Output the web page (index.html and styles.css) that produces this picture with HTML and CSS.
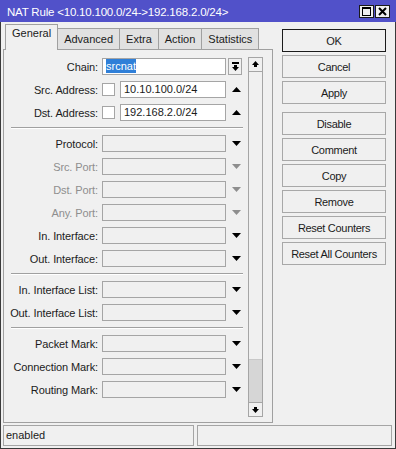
FILE: index.html
```html
<!DOCTYPE html>
<html lang="en">
<head>
    <meta charset="UTF-8">
    <title>NAT Rule</title>
    <link rel="stylesheet" href="styles.css">
</head>
<body>
    <div class="window">
        <div class="titlebar">
            <span class="title">NAT Rule &lt;10.10.100.0/24-&gt;192.168.2.0/24&gt;</span>
            <div class="title-buttons">
                <span class="tbtn">
                    <svg width="9" height="9" viewBox="0 0 9 9"><rect x="0.5" y="0.5" width="8" height="8" fill="none" stroke="#000"/><rect x="0" y="0" width="9" height="2" fill="#000"/></svg>
                </span>
                <span class="tbtn">
                    <svg width="9" height="9" viewBox="0 0 9 9"><path d="M1 1 L8 8 M8 1 L1 8" stroke="#000" stroke-width="2"/></svg>
                </span>
            </div>
        </div>

        <div class="main">
            <div class="left">
                <div class="tabs">
                    <div class="tab active">General</div>
                    <div class="tab">Advanced</div>
                    <div class="tab">Extra</div>
                    <div class="tab">Action</div>
                    <div class="tab">Statistics</div>
                </div>
                <div class="panel">
                    <div class="form">
                        <div class="section">
                            <div class="row">
                                <label class="label">Chain:</label>
                                <div class="field white"><span class="selected">srcnat</span></div>
                                <div class="dropbox">
                                    <svg width="7" height="9" viewBox="0 0 7 9"><rect x="0" y="0" width="7" height="2" fill="#000"/><rect x="2" y="3" width="3" height="2" fill="#000"/><polygon points="0,5 7,5 3.5,9" fill="#000"/></svg>
                                </div>
                            </div>
                            <div class="row">
                                <label class="label">Src. Address:</label>
                                <span class="check"></span>
                                <div class="field white short">10.10.100.0/24</div>
                                <div class="arrow"><svg width="9" height="5" viewBox="0 0 9 5"><polygon points="0,5 9,5 4.5,0" fill="#000"/></svg></div>
                            </div>
                            <div class="row">
                                <label class="label">Dst. Address:</label>
                                <span class="check"></span>
                                <div class="field white short">192.168.2.0/24</div>
                                <div class="arrow"><svg width="9" height="5" viewBox="0 0 9 5"><polygon points="0,5 9,5 4.5,0" fill="#000"/></svg></div>
                            </div>
                        </div>
                        <div class="sep"></div>
                        <div class="section">
                            <div class="row">
                                <label class="label">Protocol:</label>
                                <div class="field"></div>
                                <div class="arrow"><svg width="9" height="5" viewBox="0 0 9 5"><polygon points="0,0 9,0 4.5,5" fill="#000"/></svg></div>
                            </div>
                            <div class="row disabled">
                                <label class="label">Src. Port:</label>
                                <div class="field"></div>
                                <div class="arrow"><svg width="9" height="5" viewBox="0 0 9 5"><polygon points="0,0 9,0 4.5,5" fill="#8e8e8e"/></svg></div>
                            </div>
                            <div class="row disabled">
                                <label class="label">Dst. Port:</label>
                                <div class="field"></div>
                                <div class="arrow"><svg width="9" height="5" viewBox="0 0 9 5"><polygon points="0,0 9,0 4.5,5" fill="#8e8e8e"/></svg></div>
                            </div>
                            <div class="row disabled">
                                <label class="label">Any. Port:</label>
                                <div class="field"></div>
                                <div class="arrow"><svg width="9" height="5" viewBox="0 0 9 5"><polygon points="0,0 9,0 4.5,5" fill="#8e8e8e"/></svg></div>
                            </div>
                            <div class="row">
                                <label class="label">In. Interface:</label>
                                <div class="field"></div>
                                <div class="arrow"><svg width="9" height="5" viewBox="0 0 9 5"><polygon points="0,0 9,0 4.5,5" fill="#000"/></svg></div>
                            </div>
                            <div class="row">
                                <label class="label">Out. Interface:</label>
                                <div class="field"></div>
                                <div class="arrow"><svg width="9" height="5" viewBox="0 0 9 5"><polygon points="0,0 9,0 4.5,5" fill="#000"/></svg></div>
                            </div>
                        </div>
                        <div class="sep"></div>
                        <div class="section">
                            <div class="row">
                                <label class="label">In. Interface List:</label>
                                <div class="field"></div>
                                <div class="arrow"><svg width="9" height="5" viewBox="0 0 9 5"><polygon points="0,0 9,0 4.5,5" fill="#000"/></svg></div>
                            </div>
                            <div class="row">
                                <label class="label">Out. Interface List:</label>
                                <div class="field"></div>
                                <div class="arrow"><svg width="9" height="5" viewBox="0 0 9 5"><polygon points="0,0 9,0 4.5,5" fill="#000"/></svg></div>
                            </div>
                        </div>
                        <div class="sep"></div>
                        <div class="section">
                            <div class="row">
                                <label class="label">Packet Mark:</label>
                                <div class="field"></div>
                                <div class="arrow"><svg width="9" height="5" viewBox="0 0 9 5"><polygon points="0,0 9,0 4.5,5" fill="#000"/></svg></div>
                            </div>
                            <div class="row">
                                <label class="label">Connection Mark:</label>
                                <div class="field"></div>
                                <div class="arrow"><svg width="9" height="5" viewBox="0 0 9 5"><polygon points="0,0 9,0 4.5,5" fill="#000"/></svg></div>
                            </div>
                            <div class="row">
                                <label class="label">Routing Mark:</label>
                                <div class="field"></div>
                                <div class="arrow"><svg width="9" height="5" viewBox="0 0 9 5"><polygon points="0,0 9,0 4.5,5" fill="#000"/></svg></div>
                            </div>
                        </div>
                    </div>

                    <div class="scrollbar">
                        <div class="sb-btn">
                            <svg width="7" height="7" viewBox="0 0 7 7"><polygon points="0,4 7,4 3.5,0" fill="#000"/><rect x="2" y="4" width="3" height="2" fill="#000"/></svg>
                        </div>
                        <div class="sb-track">
                            <div class="sb-thumb"></div>
                        </div>
                        <div class="sb-btn">
                            <svg width="7" height="7" viewBox="0 0 7 7"><rect x="2" y="1" width="3" height="2" fill="#000"/><polygon points="0,3 7,3 3.5,7" fill="#000"/></svg>
                        </div>
                    </div>
                </div>
            </div>

            <div class="buttons">
                <button class="btn default">OK</button>
                <button class="btn">Cancel</button>
                <button class="btn group-end">Apply</button>
                <button class="btn">Disable</button>
                <button class="btn">Comment</button>
                <button class="btn">Copy</button>
                <button class="btn">Remove</button>
                <button class="btn">Reset Counters</button>
                <button class="btn">Reset All Counters</button>
            </div>
        </div>

        <div class="statusbar">
            <div class="status-cell first">enabled</div>
            <div class="status-cell second"></div>
        </div>
    </div>
</body>
</html>
```

FILE: styles.css
```css
body {
    margin: 0;
    font-family: 'Liberation Sans', Arial, sans-serif;
    font-size: 11px;
    color: #1b1b1b;
    background: #f0f0f0;
}
.window {
    width: 396px;
    height: 449px;
    box-sizing: border-box;
    background: #f0f0f0;
    border: 1px solid #3a3a3a;
    border-top: none;
    display: flex;
    flex-direction: column;
}
.titlebar {
    height: 22px;
    margin: 0 -1px;
    background: #5151c9;
    color: #fff;
    display: flex;
    align-items: center;
    justify-content: space-between;
    padding: 1px 0 0 7px;
    box-sizing: border-box;
}
.title {
    font-size: 11.5px;
    letter-spacing: -0.2px;
    white-space: nowrap;
}
.title-buttons {
    display: flex;
    gap: 1px;
    margin-right: 6px;
}
.tbtn {
    width: 13px;
    height: 11px;
    background: #f0f0f0;
    border: 1px solid #1a1a1a;
    display: flex;
    align-items: center;
    justify-content: center;
}

.main {
    display: flex;
    height: 401px;
}
.left {
    width: 270px;
    margin-left: 2px;
    padding-top: 3px;
    display: flex;
    flex-direction: column;
}
.tabs {
    display: flex;
    align-items: flex-end;
    height: 24px;
    margin-left: 2px;
    position: relative;
    z-index: 1;
}
.tab {
    height: 20px;
    line-height: 20px;
    padding: 0 6px;
    border: 1px solid #a0a0a0;
    border-bottom: none;
    background: #e1e1e1;
    margin-left: -1px;
    white-space: nowrap;
}
.tab:first-child {
    margin-left: 0;
}
.tab.active {
    height: 25px;
    line-height: 17px;
    margin-bottom: -1px;
    background: #f0f0f0;
    padding: 0 6px 0 6px;
}
.panel {
    height: 374px;
    box-sizing: border-box;
    border: 1px solid #a0a0a0;
    display: flex;
    padding-top: 8px;
}
.form {
    width: 240px;
}
.section {
    display: flex;
    flex-direction: column;
    gap: 6px;
}
.sep {
    margin: 6px 0 6px 7px;
    width: 232px;
    border-top: 1px solid #a0a0a0;
    border-bottom: 1px solid #fff;
}
.row {
    display: flex;
    align-items: center;
    height: 17px;
}
.label {
    width: 98px;
    padding-right: 4px;
    box-sizing: border-box;
    text-align: right;
    white-space: nowrap;
    letter-spacing: -0.1px;
}
.row.disabled .label {
    color: #8e8e8e;
}
.field {
    width: 124px;
    height: 17px;
    box-sizing: border-box;
    border: 1px solid #a5a5a5;
    background: #f0f0f0;
    padding-left: 1px;
    line-height: 15px;
    white-space: nowrap;
}
.field.white {
    background: #fff;
    padding-left: 3px;
}
.field.short {
    width: 106px;
}
.selected {
    background: #2f7fd8;
    color: #fff;
    padding: 1px 0;
}
.check {
    width: 13px;
    height: 13px;
    box-sizing: border-box;
    border: 1px solid #a5a5a5;
    background: #fff;
    margin-right: 5px;
}
.arrow {
    width: 16px;
    margin-left: 2px;
    display: flex;
    justify-content: center;
}
.dropbox {
    width: 14px;
    height: 17px;
    margin-left: 2px;
    box-sizing: border-box;
    border: 1px solid #a5a5a5;
    background: #f0f0f0;
    display: flex;
    align-items: center;
    justify-content: center;
}
.scrollbar {
    width: 15px;
    height: 360px;
    margin-top: -1px;
    margin-left: 4px;
    box-sizing: border-box;
    border: 1px solid #a5a5a5;
    display: flex;
    flex-direction: column;
}
.sb-btn {
    height: 13px;
    display: flex;
    align-items: center;
    justify-content: center;
    background: #f0f0f0;
}
.sb-track {
    flex: 1;
    border-top: 1px solid #a5a5a5;
    border-bottom: 1px solid #a5a5a5;
    display: flex;
    flex-direction: column;
    justify-content: flex-end;
}
.sb-thumb {
    height: 42px;
    background: #d6d6d6;
    border-top: 1px solid #c8c8c8;
}

.buttons {
    width: 104px;
    margin-left: 9px;
    padding-top: 7px;
    display: flex;
    flex-direction: column;
    gap: 3px;
}
.btn {
    height: 23px;
    padding: 0;
    border: 1px solid #a8a8a8;
    background: #f0f0f0;
    font-family: 'Liberation Sans', Arial, sans-serif;
    font-size: 11px;
    letter-spacing: -0.3px;
    color: #1b1b1b;
    white-space: nowrap;
}
.btn.default {
    border-color: #1b1b1b;
}
.btn.group-end {
    margin-bottom: 5px;
}

.statusbar {
    display: flex;
    gap: 3px;
    margin: 2px 0 0 2px;
    height: 21px;
}
.status-cell {
    box-sizing: border-box;
    border: 1px solid #a5a5a5;
    line-height: 19px;
    padding-left: 2px;
}
.status-cell.first {
    width: 191px;
}
.status-cell.second {
    width: 195px;
}
```
